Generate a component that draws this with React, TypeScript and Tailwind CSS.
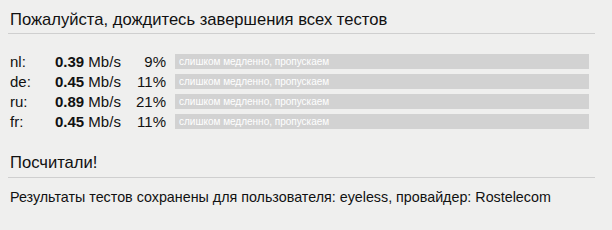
import React from 'react';

const results = [
  { code: 'nl', speed: '0.39', pct: '9%' },
  { code: 'de', speed: '0.45', pct: '11%' },
  { code: 'ru', speed: '0.89', pct: '21%' },
  { code: 'fr', speed: '0.45', pct: '11%' },
];

export default function App() {
  return (
    <div className="w-[612px] h-[230px] bg-[#efefee] text-[#111] overflow-hidden" style={{ fontFamily: '"Liberation Sans", Arial, sans-serif' }}>
      <div className="ml-2 w-[587px]">
        <h2 className="pt-[10px] pb-[3px] pl-[2px] text-[16.6px] leading-[20px] border-b border-[#cfcfcf]">
          Пожалуйста, дождитесь завершения всех тестов
        </h2>

        <div className="mt-[20px] flex flex-col gap-[5px]">
          {results.map((r) => (
            <div key={r.code} className="flex items-center h-[15px] text-[15px] leading-[15px]">
              <span className="w-[47px] pl-[2px]">{r.code}:</span>
              <span className="w-[80px]">
                <b className="font-bold">{r.speed}</b> Mb/s
              </span>
              <span className="w-[31px] text-right">{r.pct}</span>
              <div className="ml-[9px] w-[414px] h-[15px] bg-[#d2d2d2] text-white text-[10px] leading-[15px] pl-[4px]">
                слишком медленно, пропускаем
              </div>
            </div>
          ))}
        </div>

        <h2 className="mt-[24px] pb-[4px] pl-[2px] text-[16.6px] leading-[20px] border-b border-[#cfcfcf]">
          Посчитали!
        </h2>
        <p className="mt-[10px] pl-[2px] text-[14.3px] leading-[18px]">
          Результаты тестов сохранены для пользователя: eyeless, провайдер: Rostelecom
        </p>
      </div>
    </div>
  );
}
